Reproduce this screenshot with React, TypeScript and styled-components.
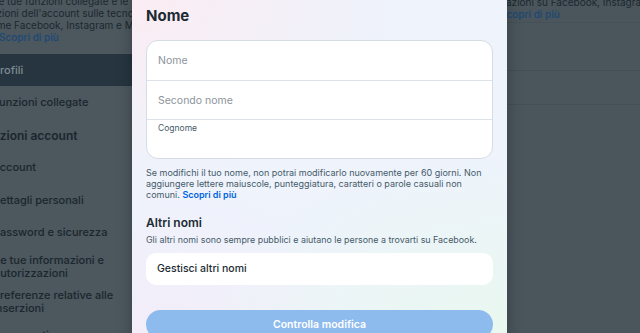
import React from 'react';
import styled, { createGlobalStyle } from 'styled-components';

const Global = createGlobalStyle`
  *, *::before, *::after { box-sizing: border-box; }
  html, body { margin: 0; padding: 0; }
  body {
    background: #4b565d;
    font-family: Inter, "Noto Sans", "Liberation Sans", sans-serif;
    -webkit-font-smoothing: antialiased;
  }
  #root { height: 333px; }
`;

const Page = styled.div`
  display: grid;
  grid-template-columns: 132px 375px 1fr;
  height: 333px;
  overflow: hidden;
  background: #4b565d;
`;

/* ---------- left dimmed settings column ---------- */
const Side = styled.aside`
  overflow: hidden;
  display: flex;
  flex-direction: column;
  color: #1b262d;
  background: #4c575e;
  & > * { flex: none; }
`;

const Intro = styled.div`
  margin-top: -5px;
  font-size: 10px;
  line-height: 12px;
  color: #1d282f;
`;

const IntroLine = styled.div<{ $shift: number; $link?: boolean }>`
  white-space: nowrap;
  margin-left: ${p => p.$shift}px;
  color: ${p => (p.$link ? '#1b4876' : 'inherit')};
  font-weight: ${p => (p.$link ? 500 : 400)};
`;

const ActiveBand = styled.div`
  margin-top: 11px;
  height: 32px;
  display: flex;
  align-items: center;
  background: #263540;
  color: #7f8b92;
  font-size: 11px;
  font-weight: 500;
  white-space: nowrap;
  text-indent: -7px;
`;

const NavList = styled.div`
  display: flex;
  flex-direction: column;
  padding-top: 0.5px;
`;

const NavItem = styled.div<{ $shift: number; $heading?: boolean; $tall?: boolean }>`
  height: ${p => (p.$tall ? 35 : 32.5)}px;
  flex: none;
  display: flex;
  align-items: center;
  margin-left: ${p => p.$shift}px;
  font-size: ${p => (p.$heading ? 12 : 11)}px;
  font-weight: ${p => (p.$heading ? 600 : 500)};
  line-height: 13px;
  white-space: ${p => (p.$tall ? 'normal' : 'nowrap')};
  width: ${p => (p.$tall ? '160px' : 'auto')};
  color: #1b262d;
`;

/* ---------- modal ---------- */
const Modal = styled.section`
  position: relative;
  z-index: 1;
  display: flex;
  flex-direction: column;
  padding: 6px 14px 0;
  background:
    radial-gradient(ellipse 70% 55% at 0% 0%, rgba(252, 236, 242, 0.95), rgba(252, 236, 242, 0) 100%),
    radial-gradient(ellipse 80% 55% at 100% 100%, rgba(232, 248, 238, 0.95), rgba(232, 248, 238, 0) 100%),
    radial-gradient(ellipse 60% 50% at 0% 100%, rgba(244, 236, 248, 0.9), rgba(244, 236, 248, 0) 100%),
    #eef3fc;
  box-shadow: 0 0 14px rgba(0, 0, 0, 0.28);
  & > * { flex: none; }
`;

const Title = styled.h1`
  margin: 0;
  font-size: 15px;
  line-height: 20px;
  font-weight: 700;
  color: #1c2b33;
`;

const FieldGroup = styled.div`
  margin-top: 14px;
  background: #ffffff;
  border: 1px solid #d5dce4;
  border-radius: 12px;
  overflow: hidden;
`;

const FieldRow = styled.div<{ $filled?: boolean }>`
  height: 39px;
  display: flex;
  align-items: ${p => (p.$filled ? 'flex-start' : 'center')};
  padding: ${p => (p.$filled ? '3px 11px 0' : '0 11px')};
  & + & { border-top: 1px solid #dde2e8; }
`;

const Placeholder = styled.span`
  font-size: 10.5px;
  color: #8d949b;
`;

const FloatLabel = styled.span`
  font-size: 8.5px;
  color: #465a69;
`;

const Helper = styled.p`
  margin: 8px 0 0;
  font-size: 9px;
  line-height: 11px;
  color: #465a69;
`;

const Link = styled.a`
  color: #0064e0;
  font-weight: 600;
  text-decoration: none;
`;

const SectionTitle = styled.h2`
  margin: 15px 0 0;
  font-size: 12px;
  line-height: 16px;
  font-weight: 600;
  color: #1c2b33;
`;

const SectionText = styled.p`
  margin: 3px 0 0;
  font-size: 8.9px;
  line-height: 11px;
  color: #465a69;
`;

const ManageRow = styled.div`
  margin-top: 7.5px;
  height: 32px;
  display: flex;
  align-items: center;
  padding: 0 11px;
  background: #ffffff;
  border-radius: 10px;
  font-size: 10.5px;
  font-weight: 500;
  color: #1c2b33;
`;

const Primary = styled.button`
  margin-top: 25px;
  height: 29px;
  border: none;
  border-radius: 15px;
  background: #8dbbee;
  color: #ffffff;
  font-family: inherit;
  font-size: 10.5px;
  font-weight: 600;
`;

/* ---------- right dimmed column ---------- */
const Right = styled.aside`
  overflow: hidden;
  display: flex;
  flex-direction: column;
  background: #4a555c;
  color: #1d282f;
  font-size: 10px;
  line-height: 12px;
  & > * { flex: none; }
`;

const RightIntro = styled.div`
  margin-top: -4px;
  height: 27px;
  border-bottom: 1px solid rgba(0, 0, 0, 0.05);
`;

const RightBlock = styled.div<{ $h: number }>`
  height: ${p => p.$h}px;
  border-bottom: 1px solid rgba(0, 0, 0, 0.07);
`;

export default function App() {
  return (
    <>
      <Global />
      <Page>
        <Side>
          <Intro>
            <IntroLine $shift={-4}>le tue funzioni collegate e le impostazioni</IntroLine>
            <IntroLine $shift={-41}>impostazioni dell'account sulle tecnologie</IntroLine>
            <IntroLine $shift={-15}>come Facebook, Instagram e Meta</IntroLine>
            <IntroLine $shift={-1} $link>Scopri di più</IntroLine>
          </Intro>
          <ActiveBand>Profili</ActiveBand>
          <NavList>
            <NavItem $shift={-7}>Funzioni collegate</NavItem>
            <NavItem $shift={-47} $heading>Impostazioni account</NavItem>
            <NavItem $shift={-8}>Account</NavItem>
            <NavItem $shift={-8}>Dettagli personali</NavItem>
            <NavItem $shift={-7}>Password e sicurezza</NavItem>
            <NavItem $shift={-6} $tall>Le tue informazioni e autorizzazioni</NavItem>
            <NavItem $shift={-7} $tall>Preferenze relative alle inserzioni</NavItem>
            <NavItem $shift={-7}>Pagamenti</NavItem>
          </NavList>
        </Side>

        <Modal>
          <Title>Nome</Title>
          <FieldGroup>
            <FieldRow><Placeholder>Nome</Placeholder></FieldRow>
            <FieldRow><Placeholder>Secondo nome</Placeholder></FieldRow>
            <FieldRow $filled><FloatLabel>Cognome</FloatLabel></FieldRow>
          </FieldGroup>
          <Helper>
            Se modifichi il tuo nome, non potrai modificarlo nuovamente per 60 giorni. Non
            aggiungere lettere maiuscole, punteggiatura, caratteri o parole casuali non
            comuni. <Link href="#">Scopri di più</Link>
          </Helper>
          <SectionTitle>Altri nomi</SectionTitle>
          <SectionText>
            Gli altri nomi sono sempre pubblici e aiutano le persone a trovarti su Facebook.
          </SectionText>
          <ManageRow>Gestisci altri nomi</ManageRow>
          <Primary>Controlla modifica</Primary>
        </Modal>

        <Right>
          <RightIntro>
            <IntroLine $shift={-1}>azioni su Facebook, Instagram</IntroLine>
            <IntroLine $shift={-7} $link>Scopri di più</IntroLine>
          </RightIntro>
          <RightBlock $h={48} />
          <RightBlock $h={34} />
        </Right>
      </Page>
    </>
  );
}
